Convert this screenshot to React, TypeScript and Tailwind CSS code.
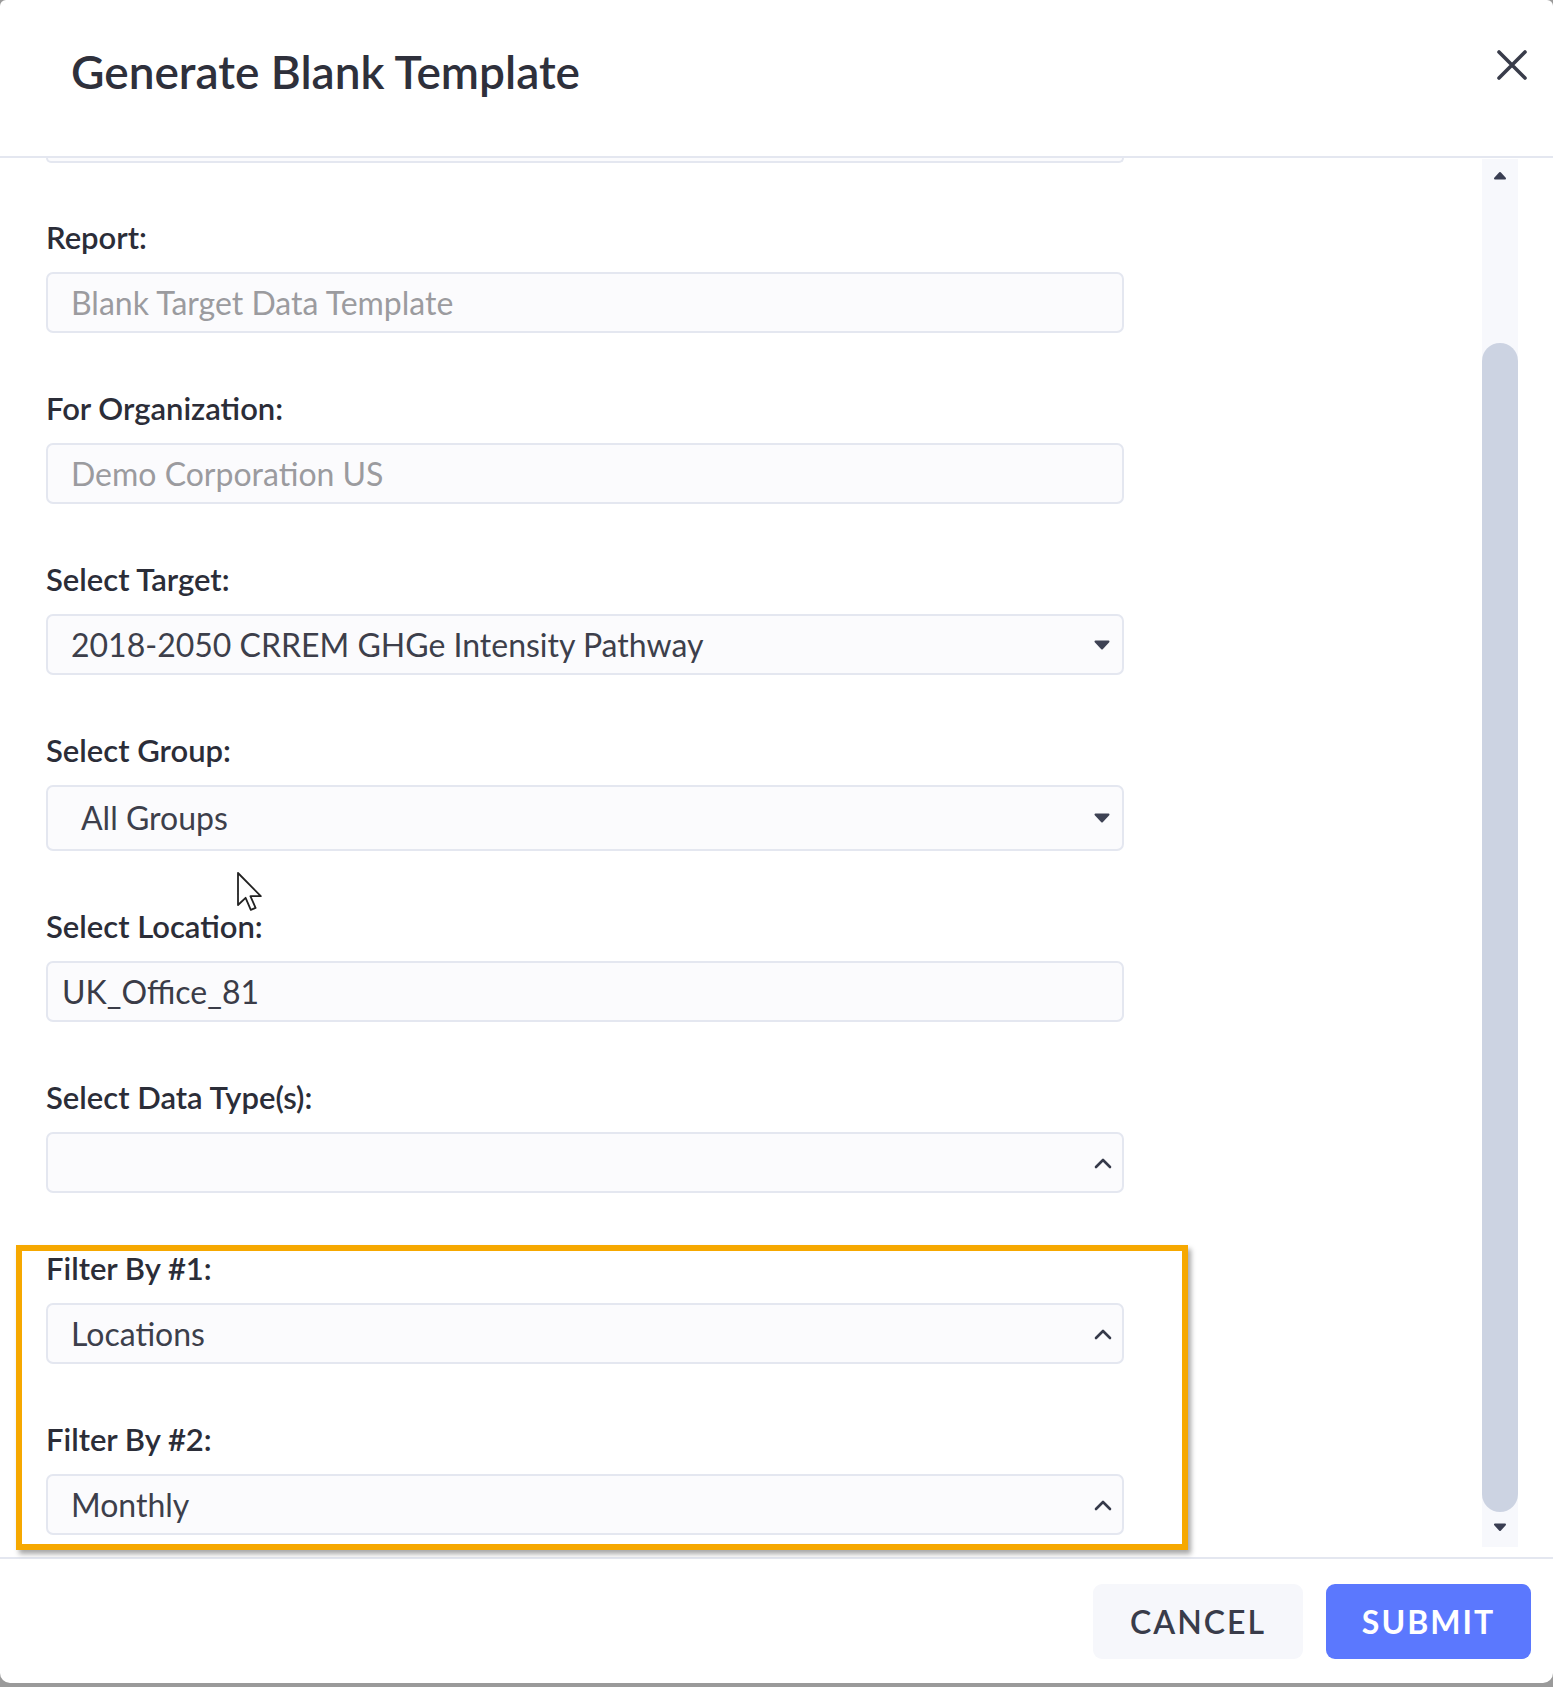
import { ReactNode } from 'react'

const font = { fontFamily: 'Lato, "Noto Sans", sans-serif' }

function CaretDown() {
  return (
    <svg width="16" height="10" viewBox="0 0 16 10" className="shrink-0">
      <path d="M1.5 1.5 H14.5 L8 8.5 Z" fill="#3e4254" stroke="#3e4254" strokeWidth="2" strokeLinejoin="round" />
    </svg>
  )
}

function ChevronUp() {
  return (
    <svg width="20" height="12" viewBox="0 0 20 12" className="shrink-0">
      <path d="M3 10 L10 3 L17 10" fill="none" stroke="#363a4a" strokeWidth="2.6" strokeLinecap="round" strokeLinejoin="round" />
    </svg>
  )
}

function Field({
  label,
  children,
  tall,
}: {
  label: string
  children: ReactNode
  tall?: boolean
}) {
  return (
    <div className="flex flex-col">
      <div className="h-[36px] flex items-center text-[31px] font-semibold text-[#2b2d38] leading-none">
        {label}
      </div>
      <div
        className={`mt-[17px] w-[1078px] ${tall ? 'h-[66px]' : 'h-[61px]'} rounded-[7px] border-2 border-[#e4e7f0] bg-[#fbfbfd] flex items-center`}
      >
        {children}
      </div>
    </div>
  )
}

export default function App() {
  return (
    <div className="w-[1553px] h-[1687px] bg-[#9a9a9a] overflow-hidden" style={font}>
      <div className="h-[1683px] bg-white rounded-b-[10px] rounded-t-[6px] flex flex-col">
        {/* Header */}
        <div className="h-[158px] shrink-0 border-b-2 border-[#e4e7f0] flex items-start justify-between">
          <h1 className="pl-[71px] pt-[42px] text-[46px] font-semibold text-[#2e303b] leading-[60px]">
            Generate Blank Template
          </h1>
          <button className="mt-[49px] mr-[25px] w-[32px] h-[32px] flex items-center justify-center">
            <svg width="32" height="32" viewBox="0 0 32 32">
              <path d="M3 3 L29 29 M29 3 L3 29" stroke="#393c4a" strokeWidth="3.6" strokeLinecap="round" />
            </svg>
          </button>
        </div>

        {/* Body */}
        <div className="h-[1399px] shrink-0 flex relative">
          <div className="flex-1 pl-[46px] flex flex-col">
            <div className="w-[1078px] h-[5px] border-2 border-t-0 border-[#e4e7f0] rounded-b-[7px] bg-[#fbfbfd]" />
            <div className="mt-[56px] flex flex-col gap-[57px]">
              <Field label="Report:">
                <span className="pl-[23px] text-[32px] text-[#9b9b9f]">Blank Target Data Template</span>
              </Field>
              <Field label="For Organization:">
                <span className="pl-[23px] text-[32px] text-[#9b9b9f]">Demo Corporation US</span>
              </Field>
              <Field label="Select Target:">
                <span className="pl-[23px] flex-1 text-[32px] text-[#3d3f4b]">
                  2018-2050 CRREM GHGe Intensity Pathway
                </span>
                <span className="pr-[12px]">
                  <CaretDown />
                </span>
              </Field>
              <Field label="Select Group:" tall>
                <span className="pl-[33px] flex-1 text-[32px] text-[#3d3f4b]">All Groups</span>
                <span className="pr-[12px]">
                  <CaretDown />
                </span>
              </Field>
              <Field label="Select Location:">
                <span className="pl-[14px] text-[32px] text-[#3a3c48]">UK_Office_81</span>
              </Field>
              <Field label="Select Data Type(s):">
                <span className="flex-1" />
                <span className="pr-[9px]">
                  <ChevronUp />
                </span>
              </Field>
              <div className="relative flex flex-col gap-[57px]">
                <Field label="Filter By #1:">
                  <span className="pl-[23px] flex-1 text-[32px] text-[#3d3f4b]">Locations</span>
                  <span className="pr-[9px]">
                    <ChevronUp />
                  </span>
                </Field>
                <Field label="Filter By #2:">
                  <span className="pl-[23px] flex-1 text-[32px] text-[#3d3f4b]">Monthly</span>
                  <span className="pr-[9px]">
                    <ChevronUp />
                  </span>
                </Field>
                <div className="absolute left-[-30px] top-[-5px] w-[1172px] h-[305px] border-[6px] border-[#f6a800] shadow-[3px_4px_5px_rgba(0,0,0,0.35)] pointer-events-none" />
              </div>
            </div>
          </div>

          {/* Scrollbar */}
          <div className="w-[36px] h-[1388px] mt-[1px] bg-[#f7f8fc] flex flex-col shrink-0">
            <div className="h-[32px] flex items-center justify-center">
              <svg width="14" height="9" viewBox="0 0 14 9">
                <path d="M2 7.5 L7 2 L12 7.5 Z" fill="#3a3e52" stroke="#3a3e52" strokeWidth="2" strokeLinejoin="round" />
              </svg>
            </div>
            <div className="h-[152px]" />
            <div className="h-[1169px] rounded-full bg-[#ccd3e2]" />
            <div className="h-[30px] flex items-center justify-center">
              <svg width="14" height="9" viewBox="0 0 14 9">
                <path d="M2 1.5 L12 1.5 L7 7 Z" fill="#3a3e52" stroke="#3a3e52" strokeWidth="2" strokeLinejoin="round" />
              </svg>
            </div>
          </div>
          <div className="w-[35px] shrink-0" />

          {/* Mouse cursor */}
          <svg
            className="absolute left-[236px] top-[713px] pointer-events-none"
            width="28"
            height="42"
            viewBox="0 0 14 21"
          >
            <path
              d="M1 1 L1 17 L4.8 13.4 L7.4 19.4 L9.8 18.4 L7.2 12.6 L12.4 12.6 Z"
              fill="white"
              stroke="#222"
              strokeWidth="0.9"
              strokeLinejoin="round"
            />
          </svg>
        </div>

        {/* Footer */}
        <div className="flex-1 border-t-2 border-[#e4e7f0] flex items-start justify-end gap-[23px] pt-[25px] pr-[22px]">
          <button className="w-[210px] h-[75px] rounded-[9px] bg-[#f6f7fb] text-[32px] font-semibold tracking-[2px] text-[#393c4a]">
            CANCEL
          </button>
          <button className="w-[205px] h-[75px] rounded-[9px] bg-[#5b78fe] text-[32px] font-bold tracking-[2px] text-white">
            SUBMIT
          </button>
        </div>
      </div>
    </div>
  )
}
